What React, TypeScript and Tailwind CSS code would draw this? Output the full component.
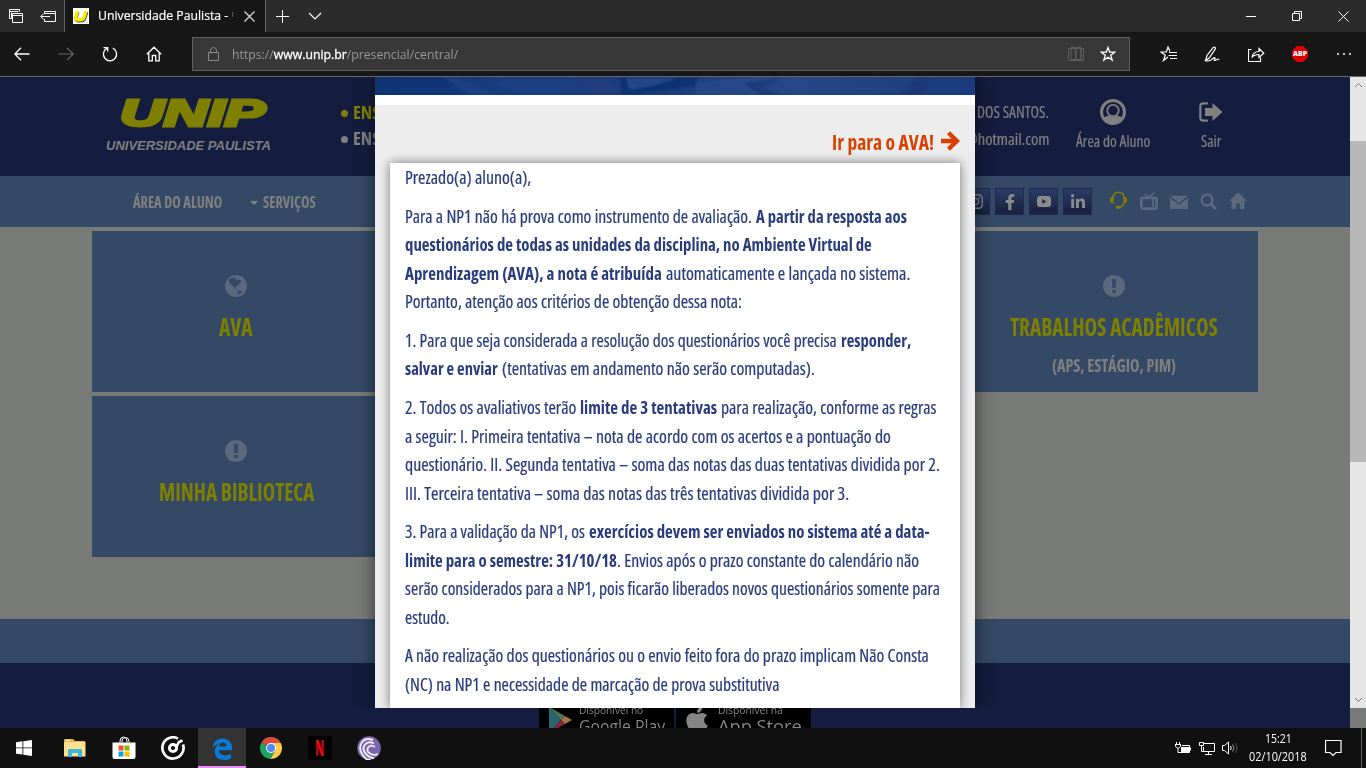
import React, { useLayoutEffect, useRef, useState } from "react";
import { FaApple, FaFacebookF, FaLinkedinIn, FaInstagram } from "react-icons/fa";

const ui = "font-['Open_Sans','Noto_Sans',sans-serif]";

/** One line of text, scaled horizontally to fill the width of its box. */
function Fit({ className = "", children }: { className?: string; children: React.ReactNode }) {
  const outer = useRef<HTMLSpanElement>(null);
  const inner = useRef<HTMLSpanElement>(null);
  const [scale, setScale] = useState(1);
  useLayoutEffect(() => {
    if (outer.current && inner.current) {
      setScale(outer.current.clientWidth / inner.current.offsetWidth);
    }
  }, []);
  return (
    <span ref={outer} className={`block shrink-0 whitespace-nowrap ${className}`}>
      <span ref={inner} className="inline-block origin-left" style={{ transform: `scaleX(${scale})` }}>
        {children}
      </span>
    </span>
  );
}

function Ico({ w, h, children, className = "" }: { w: number; h: number; children: React.ReactNode; className?: string }) {
  return (
    <svg width={w} height={h} viewBox={`0 0 ${w} ${h}`} fill="none" stroke="currentColor" className={`shrink-0 ${className}`}>
      {children}
    </svg>
  );
}

function TabBar() {
  return (
    <div className="flex h-8 bg-[#2b2b2b] text-white">
      <div className="flex w-16 items-center pl-[9px]">
        <Ico w={14} h={14}>
          <path d="M.5 9.500v-9h10v2M.5 2.500h9M2.500 9.500h-2" />
          <path d="M3.500 4.500h10v9h-10zM3.500 6.500h10M2.500 3.500v6" />
        </Ico>
        <Ico w={17} h={12} className="ml-[17px]">
          <path d="M4.500 4V1.500h11v10h-11V9M4.500 3.500h11M1 6.500h9M3.500 3.700L.8 6.500l2.700 2.800" />
        </Ico>
      </div>
      <div className="flex w-[202px] items-center border-x border-[#666] bg-[#171717] pl-2">
        <span className="flex h-4 w-4 items-center justify-center overflow-hidden bg-white">
          <svg width="16" height="16" viewBox="0 0 16 16">
            <path d="M5 4L3 10q-.6 3 3 3h2q3 0 4-3l2-6" fill="none" stroke="#555" strokeWidth="3" />
            <path d="M4.500 3L2.700 9q-.5 2.800 2.500 2.800h2q3 0 4-2.800L13 3" fill="none" stroke="#f5ea00" strokeWidth="3.300" />
          </svg>
        </span>
        <span className={`${ui} ml-[9px] flex text-[13px] [-webkit-text-stroke:0.2px_white]`}>
          <Fit className="w-[130px]">Universidade Paulista -</Fit>
        </span>
        <span className="mb-[3px] ml-1 h-[5px] w-px bg-[#555]" />
        <Ico w={11} h={11} className="ml-[11px]">
          <path d="M.5.5l10 10M10.500.5l-10 10" strokeWidth="1.200" stroke="#ddd" />
        </Ico>
      </div>
      <div className="flex items-center pl-[10px]">
        <Ico w={13} h={13}>
          <path d="M6.500 0v13M0 6.500h13" />
        </Ico>
        <Ico w={14} h={8} className="ml-[19px]">
          <path d="M1 1l6 6 6-6" strokeWidth="1.200" />
        </Ico>
      </div>
      <div className="ml-auto flex">
        <span className="flex w-[46px] items-center justify-center">
          <Ico w={10} h={3}><path d="M0 1.500h10" /></Ico>
        </span>
        <span className="flex w-[46px] items-center justify-center">
          <Ico w={10} h={10}><path d="M.5 2.500h7v7h-7zM2.500 2.500v-2h7v7h-2" /></Ico>
        </span>
        <span className="flex w-[46px] items-center justify-center">
          <Ico w={11} h={11}><path d="M.5.5l10 10M10.500.5l-10 10" /></Ico>
        </span>
      </div>
    </div>
  );
}

function Slot({ children }: { children: React.ReactNode }) {
  return <span className="flex w-11 shrink-0 items-center justify-center">{children}</span>;
}

function Toolbar() {
  return (
    <div className="flex h-[45px] items-stretch border-b border-[#666] bg-[#171717] text-white">
      <Slot>
        <Ico w={16} h={14}><path d="M.8 7H15.500M7 .8L.8 7 7 13.200" strokeWidth="1.300" /></Ico>
      </Slot>
      <Slot>
        <Ico w={16} h={14} className="text-[#6b6b6b]"><path d="M15.200 7H.5M9 .8L15.200 7 9 13.200" strokeWidth="1.200" /></Ico>
      </Slot>
      <Slot>
        <Ico w={16} h={16}><path d="M5.200 2.200A6.600 6.600 0 1 0 10.800 2.200M1.500 1.600h4.200v4" strokeWidth="1.300" /></Ico>
      </Slot>
      <Slot>
        <Ico w={16} h={16}><path d="M.8 8.200L8 1.200l7.200 7M2.800 6.500v8.300h3.500V9.500h3.400v5.300h3.500V6.500" strokeWidth="1.300" /></Ico>
      </Slot>
      <div className="ml-4 mt-[5px] flex h-[34px] w-[938px] items-center border border-[#606060] bg-[#383838] pl-[15px]">
        <Ico w={11} h={14} className="text-[#8b8b8b]">
          <path d="M.5 5.500h10v8H.5zM2.500 5.500V3.500a3 3 0 0 1 6 0v2" />
        </Ico>
        <span className={`${ui} ml-[13px] mt-px flex text-[13px] text-[#989898]`}>
          <Fit className="w-[226px]">
            https://<span className="text-white [-webkit-text-stroke:0.3px_white]">www.unip.br</span>/presencial/central/
          </Fit>
        </span>
        <Ico w={16} h={15} className="ml-auto text-[#5e5e5e]">
          <path d="M.5 1.500h15v12H.5zM3 1v11M13 1v11M3 .5h4.500v12H3M8.500.5H13v12H8.500M8 1v13" />
        </Ico>
        <Ico w={16} h={16} className="ml-4 mr-[13px]">
          <path d="M8 1.500l1.700 4.700h5l-4 3 1.500 4.900L8 11.200l-4.200 2.900 1.500-4.900-4-3h5z" strokeWidth="1.300" />
        </Ico>
      </div>
      <div className="ml-4 flex">
        <Slot>
          <Ico w={17} h={16}><path d="M10 5.500L8 1 6.300 6H1l4.300 3.300L3.500 14.500 8 11M9 6.500h8M8.500 9.500h8.500M10 12.500h7" strokeWidth="1.200" /></Ico>
        </Slot>
        <Slot>
          <Ico w={16} h={16}><path d="M1.500 14.500L3 9.500 9.200 1.500q2-1 2.300 1L5.200 12 1.500 14.700q4 1 6.500-1.300t3-1.500q.6.600-.8 2.300 1 .8 2.400-.6t2.400.5" strokeWidth="1.200" /></Ico>
        </Slot>
        <Slot>
          <Ico w={17} h={15}><path d="M3.500 2.500h-3v12h12v-4M4 10.500q1-6 7-6V1.500l4.800 4.700L11 10.500v-3q-5 0-7 3z" strokeWidth="1.200" /></Ico>
        </Slot>
        <Slot>
          <span className={`${ui} flex h-4 w-4 items-center justify-center bg-[#d00] text-[7px] font-extrabold text-white [clip-path:polygon(30%_0,70%_0,100%_30%,100%_70%,70%_100%,30%_100%,0_70%,0_30%)]`}>
            <Fit className="w-[14px]">ABP</Fit>
          </span>
        </Slot>
        <Slot>
          <Ico w={14} h={4}><path d="M0 2h2M6 2h2M12 2h2" strokeWidth="1.700" /></Ico>
        </Slot>
      </div>
    </div>
  );
}

const cond = "font-['Open_Sans','Noto_Sans',sans-serif] [font-stretch:75%]";

function SiteHeader() {
  return (
    <header className={`${cond} flex h-[99px] bg-[#141d3f] pl-[106px] text-[#808080]`}>
      <div className="w-[165px] shrink-0 pt-[18px] font-['Liberation_Sans',Arial,sans-serif] font-bold italic">
        <div className="flex h-[38px] items-center pl-[14px] text-[36px] leading-[38px] text-[#808000] [-webkit-text-stroke:3px_#808000]">
          <Fit className="w-[145px]">UNIP</Fit>
        </div>
        <div className="mt-[5px] text-[13px] leading-4">
          <Fit className="w-[165px]">UNIVERSIDADE PAULISTA</Fit>
        </div>
      </div>
      <div className="ml-[70px] flex flex-col pt-[23px] text-[17px] font-bold leading-[26px]">
        <div className="flex items-center gap-[5px] text-[#808000]">
          <span className="h-[7px] w-[7px] rounded-full bg-current" />
          <Fit className="w-[27px]">ENS</Fit>
        </div>
        <div className="flex items-center gap-[5px]">
          <span className="h-[7px] w-[7px] rounded-full bg-current" />
          <Fit className="w-[27px]">ENS</Fit>
        </div>
      </div>
      <div className="ml-auto flex [-webkit-text-stroke:0.2px_#808080]">
        <div className="flex flex-col items-end pt-[22px] text-[16px] leading-[27px]">
          <Fit className="w-[72px]">DOS SANTOS.</Fit>
          <Fit className="w-[82px]">@hotmail.com</Fit>
        </div>
        <div className="ml-[27px] flex w-[74px] flex-col items-center pt-[21px] text-[16px] leading-[22px]">
          <svg width="26" height="28" viewBox="0 0 26 28" className="shrink-0">
            <circle cx="13" cy="14" r="11.500" fill="none" stroke="#808080" strokeWidth="3" />
            <path d="M3 20.500q2-2.500 6-3 4 3 8 0 4 .5 6 3-3.500 6-10 6T3 20.500z" fill="#808080" />
            <circle cx="13" cy="12.500" r="5.700" fill="#141d3f" stroke="#808080" strokeWidth="1.800" />
          </svg>
          <Fit className="mt-[4px] w-[74px]">Área do Aluno</Fit>
        </div>
        <div className="ml-[49px] mr-[127px] flex w-6 flex-col items-center pt-[25px] text-[16px] leading-[22px]">
          <svg width="24" height="20" viewBox="0 0 24 20" className="shrink-0">
            <path d="M9 1.300H4.500Q1.300 1.300 1.300 4.500v11q0 3.200 3.200 3.200H9" fill="none" stroke="#808080" strokeWidth="2.200" />
            <path d="M6 6h7.500V1L23.500 10 13.500 19v-5H6z" fill="#808080" />
          </svg>
          <Fit className="mt-[8px] w-5">Sair</Fit>
        </div>
      </div>
    </header>
  );
}

function Social({ children }: { children: React.ReactNode }) {
  return (
    <span className="flex h-[27px] w-[29px] items-center justify-center border border-[#1e2c50] bg-linear-to-b from-[#2b3d69] to-[#18203b] text-[#8b8b8b]">
      {children}
    </span>
  );
}

function SiteNav() {
  return (
    <nav className={`${cond} flex h-[51px] items-center bg-[#344966] pl-[133px] text-[16px] font-bold text-[#808080]`}>
      <Fit className="w-[89px]">ÁREA DO ALUNO</Fit>
      <svg width="8" height="4" viewBox="0 0 8 4" className="ml-7 mt-[3px]"><path d="M0 0h8L4 4z" fill="#808080" /></svg>
      <Fit className="ml-[5px] w-[53px]">SERVIÇOS</Fit>
      <div className="ml-auto mr-[103px] flex items-center">
        <div className="flex gap-[5px]">
          <Social><FaInstagram size={17} /></Social>
          <Social><FaFacebookF size={16} /></Social>
          <Social>
            <svg width="14" height="11" viewBox="0 0 14 11">
              <path d="M3 0h8q3 0 3 3v5q0 3-3 3H3Q0 11 0 8V3Q0 0 3 0zM5.200 3v5l4.300-2.500z" fill="#8b8b8b" fillRule="evenodd" />
            </svg>
          </Social>
          <Social><FaLinkedinIn size={16} /></Social>
        </div>
        <div className="ml-[18px] flex items-center text-[#5b697e]">
          <svg width="17" height="18" viewBox="0 0 17 18" fill="none" className="-mt-[3px]">
            <path d="M2.800 8.500V7Q3.200 1.200 8.500 1.200T14.200 7v1.500" stroke="#808000" strokeWidth="1.600" />
            <path d="M3.500 5.500v7Q0 12.500 0 9t3.500-3.500zM13.500 5.500v7q3.500 0 3.500-3.500t-3.500-3.500z" fill="#808000" />
            <path d="M14 12q-.8 3.300-4 4" stroke="#808000" strokeWidth="1.300" />
            <path d="M6 15h4.500v2.700H6z" fill="#808000" />
          </svg>
          <svg width="18" height="18" viewBox="0 0 18 18" fill="none" stroke="currentColor" className="-mt-[1px] ml-[13px]">
            <path d="M4.500 1.800L9 5l5.500-4.500" strokeWidth="1.600" />
            <rect x="1.400" y="5.900" width="15.200" height="10.700" rx="1" strokeWidth="2.800" />
            <path d="M13 7v8" strokeWidth="1.800" />
          </svg>
          <svg width="18" height="14" viewBox="0 0 18 14" className="ml-3" fill="currentColor">
            <path d="M0 .8h18L9 8zM0 3l9 6.800L18 3v11H0z" />
          </svg>
          <svg width="17" height="17" viewBox="0 0 17 17" fill="none" stroke="currentColor" className="ml-3">
            <circle cx="7" cy="7" r="5.500" strokeWidth="2.400" /><path d="M11 11l5 5" strokeWidth="3" />
          </svg>
          <svg width="18" height="17" viewBox="0 0 18 17" fill="currentColor" className="-mt-[2px] ml-3">
            <path d="M9 0l9 9.300h-2.600V17h-4.700v-5.500H7.300V17H2.600V9.300H0z" />
          </svg>
        </div>
      </div>
    </nav>
  );
}

function Alert() {
  return (
    <svg width="22" height="22" viewBox="0 0 22 22" className="shrink-0">
      <circle cx="11" cy="11" r="11" fill="#5b697f" />
      <path d="M8.800 4h4.400l-.6 9H9.400zM9.300 15h3.400v3H9.300z" fill="#344966" />
    </svg>
  );
}

function Globe() {
  return (
    <svg width="22" height="22" viewBox="0 0 22 22" className="shrink-0">
      <circle cx="11" cy="11" r="11" fill="#5b697f" />
      <path d="M4.500 4L8 2.800l3 .4-1 1.600 1.500 1 1.500-1.800 1 .8 3 1.200-1.800 1.700-2.200 2.500-2 1.500-1 1.700 1.500 1.300 2.500.8L11.800 14 8 11.500 5.500 8.800 4 6.500zM12.500 16.500l2.500-1.200 2 1.200-1.600 2-2.400 1.500z" fill="#344966" />
    </svg>
  );
}

function Card({ icon, title, sub, className = "" }: { icon: React.ReactNode; title: React.ReactNode; sub?: React.ReactNode; className?: string }) {
  return (
    <div className={`${cond} flex h-[161px] w-[288px] flex-col items-center bg-[#344966] pt-11 font-bold ${className}`}>
      {icon}
      <div className="mt-[14px] text-[24px] leading-[32px] text-[#808000]">{title}</div>
      {sub && <div className="mt-[10px] text-[18px] leading-6 text-[#808080]">{sub}</div>}
    </div>
  );
}

type Seg = { t: string; w: string; b?: boolean; tight?: boolean };

const paragraphs: Seg[][][] = [
  [[{ t: "Prezado(a) aluno(a),", w: "w-[126px]" }]],
  [
    [{ t: "Para a NP1 não há prova como instrumento de avaliação.", w: "w-[347px]" }, { t: "A partir da resposta aos", w: "w-[151px]", b: true }],
    [{ t: "questionários de todas as unidades da disciplina, no Ambiente Virtual de", w: "w-[467px]", b: true }],
    [{ t: "Aprendizagem (AVA), a nota é atribuída", w: "w-[257px]", b: true }, { t: "automaticamente e lançada no sistema.", w: "w-[244px]" }],
    [{ t: "Portanto, atenção aos critérios de obtenção dessa nota:", w: "w-[337px]" }],
  ],
  [
    [{ t: "1. Para que seja considerada a resolução dos questionários você precisa", w: "w-[432px]" }, { t: "responder,", w: "w-[70px]", b: true }],
    [{ t: "salvar e enviar", w: "w-[93px]", b: true }, { t: "(tentativas em andamento não serão computadas).", w: "w-[313px]" }],
  ],
  [
    [{ t: "2. Todos os avaliativos terão", w: "w-[171px]" }, { t: "limite de 3 tentativas", w: "w-[137px]", b: true }, { t: "para realização, conforme as regras", w: "w-[215px]" }],
    [{ t: "a seguir: I. Primeira tentativa – nota de acordo com os acertos e a pontuação do", w: "w-[486px]" }],
    [{ t: "questionário. II. Segunda tentativa – soma das notas das duas tentativas dividida por 2.", w: "w-[535px]" }],
    [{ t: "III. Terceira tentativa – soma das notas das três tentativas dividida por 3.", w: "w-[444px]" }],
  ],
  [
    [{ t: "3. Para a validação da NP1, os", w: "w-[180px]" }, { t: "exercícios devem ser enviados no sistema até a data-", w: "w-[341px]", b: true }],
    [{ t: "limite para o semestre: 31/10/18", w: "w-[212px]", b: true }, { t: ". Envios após o prazo constante do calendário não", w: "w-[302px]", tight: true }],
    [{ t: "serão considerados para a NP1, pois ficarão liberados novos questionários somente para", w: "w-[535px]" }],
    [{ t: "estudo.", w: "w-[45px]" }],
  ],
  [
    [{ t: "A não realização dos questionários ou o envio feito fora do prazo implicam Não Consta", w: "w-[524px]" }],
    [{ t: "(NC) na NP1 e necessidade de marcação de prova substitutiva", w: "w-[374px]" }],
  ],
];

function Modal() {
  return (
    <div className={`${cond} h-full w-[600px] bg-[#ededed] shadow-[0_0_15px_rgba(0,0,0,0.6)]`}>
      <svg width="600" height="18" viewBox="0 0 600 18" className="block">
        <defs>
          <linearGradient id="banner" x1="0" x2="1">
            <stop offset="0" stopColor="#103474" />
            <stop offset=".12" stopColor="#12357a" />
            <stop offset=".22" stopColor="#1c3e83" />
            <stop offset=".5" stopColor="#1b3d7e" />
            <stop offset=".7" stopColor="#264685" />
            <stop offset=".85" stopColor="#21427f" />
            <stop offset="1" stopColor="#193a7c" />
          </linearGradient>
          <filter id="soft"><feGaussianBlur stdDeviation="1" /></filter>
        </defs>
        <rect width="600" height="18" fill="url(#banner)" />
        <g filter="url(#soft)">
          <path d="M68 0h12l42 18H96z" fill="#1e4083" />
          <path d="M82 0h12l50 18h-18z" fill="#163a7c" />
          <path d="M200 0h30l15 18h-25z" fill="#233e7b" />
          <path d="M245 0h78l-3 9-66 9h-7z" fill="#0f3271" />
          <path d="M251 1h22l30 0-26 8-23 4z" fill="#24478a" />
          <path d="M322 5l54-5h22l-16 18h-62z" fill="#264786" />
          <path d="M370 6l34-4-18 9 20 7h-20l-12-8z" fill="#1a3b78" />
          <path d="M545 0h10l-8 18h-22z" fill="#1a3977" />
        </g>
      </svg>
      <div className="h-[10px] bg-white" />
      <div className="flex h-[58px] items-end justify-end pb-[6px] pr-[15px] text-[21px] font-bold leading-[30px] text-[#d93f00]">
        <Fit className="w-[102px]">Ir para o AVA!</Fit>
        <svg width="19" height="20" viewBox="0 0 19 20" className="mb-[6px] ml-[7px]">
          <path d="M0 7.700h10.500L6 3.200 9 .3 19 10 9 19.700l-3-2.900 4.500-4.500H0z" fill="#d93f00" />
        </svg>
      </div>
      <div className="mx-[15px] h-[545px] bg-white px-[15px] text-[18.500px] leading-[28.570px] text-[#293c7e] shadow-[0_0_10px_rgba(0,0,0,0.5)]">
        {paragraphs.map((p, i) => (
          <div key={i} className="mb-[10px]">
            {p.map((line, j) => (
              <div key={j} className="flex h-[28.570px]">
                {line.map((s, k) => (
                  <Fit key={k} className={`${s.w} ${s.b ? "font-bold" : "[-webkit-text-stroke:0.200px_#293c7e]"} ${k > 0 && !s.tight ? "ml-[4px]" : ""}`}>
                    {s.t}
                  </Fit>
                ))}
              </div>
            ))}
          </div>
        ))}
      </div>
    </div>
  );
}

function Scrollbar() {
  return (
    <div className="flex w-4 flex-col bg-[#787a78]">
      <div className="flex h-[64px] items-start justify-center bg-[#e6e6e6] pt-[5px]">
        <Ico w={9} h={6}><path d="M1 5l3.500-3.500L8 5" stroke="#777" /></Ico>
      </div>
      <div className="h-[321px] bg-[#b8b8b8]" />
      <div className="flex h-[246px] items-end justify-center bg-[#e6e6e6] pb-[5px]">
        <Ico w={9} h={6}><path d="M1 1l3.500 3.500L8 1" stroke="#777" /></Ico>
      </div>
    </div>
  );
}

function Footer() {
  return (
    <footer className="h-[65px] overflow-hidden bg-[#141d3f] pt-[34px]">
      <div className="flex justify-center gap-[2px] font-['Open_Sans',sans-serif] font-medium text-[#858585]">
        <div className="flex h-10 w-[135px] bg-black pl-[10px]">
          <svg width="23" height="26" viewBox="0 0 23 26" className="mt-[10px]">
            <path d="M0 0l12 13L0 26z" fill="#2a6670" />
            <path d="M0 0l16 9-4 4z" fill="#47785f" />
            <path d="M16 9l7 4-7 4-4-4z" fill="#a87443" />
            <path d="M0 26l16-9-4-4z" fill="#8a2437" />
          </svg>
          <div className="ml-[7px] pt-[7px]">
            <Fit className="w-[64px] text-[10px] leading-3">Disponível no</Fit>
            <Fit className="w-[86px] text-[18px] leading-[20px]">Google Play</Fit>
          </div>
        </div>
        <div className="flex h-10 w-[135px] bg-black pl-[8px]">
          <FaApple size={29} className="mt-2 w-[26px]" />
          <div className="ml-[8px] pt-[7px]">
            <Fit className="w-[65px] text-[10px] leading-3">Disponível na</Fit>
            <Fit className="w-[84px] text-[18px] leading-[20px]">App Store</Fit>
          </div>
        </div>
      </div>
    </footer>
  );
}

function TaskItem({ children, active = false }: { children: React.ReactNode; active?: boolean }) {
  return (
    <span className={`flex w-12 items-center justify-center ${active ? "border-b-2 border-[#ea90f5] bg-[#333]" : ""}`}>
      {children}
    </span>
  );
}

function Taskbar() {
  return (
    <div className="flex h-10 bg-[#101010] text-white">
      <span className="mr-[3px] flex w-12 items-center justify-center">
        <svg width="16" height="16" viewBox="0 0 16 16" fill="#fff">
          <path d="M0 2.200l6.500-.9v6.200H0zM7.300 1.200L16 0v7.500H7.300zM0 8.300h6.500v6.300L0 13.700zM7.300 8.300H16V16l-8.700-1.300z" />
        </svg>
      </span>
      <div className="flex gap-px">
        <TaskItem>
          <svg width="22" height="18" viewBox="0 0 22 18">
            <path d="M0 1q0-1 1-1h8l2 2h10v15H0z" fill="#e9b64d" />
            <path d="M1 3h20.500v14.500H0V4z" fill="#fee08f" />
            <path d="M4 18v-6.500q0-1.500 1.500-1.500h11q1.500 0 1.500 1.500V18h-4v-4H8v4z" fill="#3cb5e5" />
            <path d="M2 1.500h4" stroke="#fff3c4" />
          </svg>
        </TaskItem>
        <TaskItem>
          <svg width="24" height="24" viewBox="0 0 24 24">
            <path d="M.5 6.500h23V21q0 2-2 2h-19q-2 0-2-2z" fill="#fff" />
            <path d="M8 6.500V5q0-4 3.500-4T15 5v1.500M10 6.500V5q0-3 3-3.500 4 0 4 3.500v1.500" fill="none" stroke="#fff" />
            <path d="M6.500 9.500h5v5h-5z" fill="#f25022" /><path d="M12.500 9.500h5v5h-5z" fill="#7fba00" />
            <path d="M6.500 15.500h5v5h-5z" fill="#00a4ef" /><path d="M12.500 15.500h5v5h-5z" fill="#ffb900" />
          </svg>
        </TaskItem>
        <TaskItem>
          <svg width="24" height="24" viewBox="0 0 24 24" fill="none" stroke="#fff">
            <path d="M17 2.600A10.600 10.600 0 1 0 22 8.500" strokeWidth="2.700" />
            <circle cx="12" cy="12" r="3.600" strokeWidth="3" />
            <path d="M15 11.500L18 6l3.500-1.500" strokeWidth="2.600" />
          </svg>
        </TaskItem>
        <TaskItem active>
          <svg width="21" height="22" viewBox="0 0 21 22" className="mt-[4px]">
            <path d="M.5 9.500Q2 1 10.500.5 19.700.7 20.200 10v2.300H7q.3 5 5.800 5.300 3.400 0 6.200-1.700v4.600Q16 22 12 22 2.500 21.500 2.700 13q.3-5 5-7.500Q4 6 .5 9.500zM7.200 8.600h7.100q0-3.900-3.400-4-3.300.2-3.700 4z" fill="#0a7ada" fillRule="evenodd" />
          </svg>
        </TaskItem>
        <TaskItem>
          <svg width="22" height="22" viewBox="0 0 22 22">
            <path d="M11 11L1.500 5.500A11 11 0 0 0 10.500 22L15.500 13.500z" fill="#1da462" />
            <path d="M11 6h9.800A11 11 0 0 1 10.500 22L15.300 13.500z" fill="#ffcd46" />
            <path d="M1.500 5.500A11 11 0 0 1 20.800 6H11v5z" fill="#dd4b3e" />
            <circle cx="11" cy="11" r="5" fill="#fff" /><circle cx="11" cy="11" r="4" fill="#4c8bf5" />
          </svg>
        </TaskItem>
        <TaskItem>
          <svg width="24" height="24" viewBox="0 0 24 24">
            <path d="M0 0h24v24H0z" fill="#000" />
            <path d="M8 4h2.700v15.500L8 20zM13.300 4H16v16l-2.700-.5z" fill="#a90b13" /><path d="M8 4h2.700L16 20l-2.800-.5z" fill="#e50914" />
          </svg>
        </TaskItem>
        <TaskItem>
          <svg width="24" height="24" viewBox="0 0 24 24" fill="none">
            <circle cx="12" cy="12" r="11.800" fill="#7767aa" />
            <path d="M16 4Q8 1 4.500 7T6 19.500 13 23M17 7.500Q11 4.500 7.800 9T9 18t8 4M18 11Q13.500 8 11.200 11.500T13 17.500t8 .5" stroke="#f0edf8" strokeWidth="1.900" />
          </svg>
        </TaskItem>
      </div>
      <div className="ml-auto flex items-center">
        <Ico w={17} h={12}>
          <path d="M7 3.500h7.500v7h-9M15.500 5.500v3M1.500 0v2.500M4.500 0v2.500M0 2.500h6M.5 2.500v2l2 1.500h1l2-1.500v-2M3 6v4.500h3" />
          <path d="M6 5h8v5H6z" fill="#fff" stroke="none" />
        </Ico>
        <Ico w={17} h={13} className="ml-[7px]">
          <path d="M5 1.500h10.500v8h-11V5M9.500 9.500v3M6 12.500h7M.5.500h4v3h-4zM2.500 3.500v6h2" />
        </Ico>
        <Ico w={17} h={14} className="ml-[6px]">
          <path d="M.5 4.500h2L6.500 1v12L2.500 9.500h-2zM8.500 5q1.500 2 0 4" />
          <path d="M10.500 3.500q3 3.500 0 7" stroke="#999" /><path d="M13 2q4 5 0 10" stroke="#555" />
        </Ico>
        <div className={`${ui} ml-[9px] flex w-[60px] flex-col items-center text-[12px] leading-[18px]`}>
          <Fit className="w-[27px]">15:21</Fit>
          <Fit className="w-[58px]">02/10/2018</Fit>
        </div>
        <Ico w={17} h={17} className="ml-[17px] mr-[19px]">
          <path d="M.5.500h15.500v12h-5l-3 3-3-3H.5z" strokeWidth="1.200" />
        </Ico>
        <span className="mr-1 h-10 w-px bg-[#666]" />
      </div>
    </div>
  );
}

export default function App() {
  return (
    <div className="flex h-[768px] w-[1366px] flex-col overflow-hidden">
      <TabBar />
      <Toolbar />
      <div className="flex h-[651px]">
        <div className="relative w-[1350px] overflow-hidden bg-[#787a78]">
          <SiteHeader />
          <SiteNav />
          <main className="h-[392px] pl-[92px] pt-1">
            <div className="grid w-[1166px] grid-cols-[repeat(4,288px)] justify-between gap-y-1">
              <Card icon={<Globe />} title={<Fit className="w-[34px]">AVA</Fit>} />
              <Card
                className="col-start-4"
                icon={<Alert />}
                title={<Fit className="w-[208px]">TRABALHOS ACADÊMICOS</Fit>}
                sub={<Fit className="w-[124px]">(APS, ESTÁGIO, PIM)</Fit>}
              />
              <Card icon={<Alert />} title={<Fit className="w-[155px]">MINHA BIBLIOTECA</Fit>} />
            </div>
          </main>
          <div className="h-[44px] bg-[#344966]" />
          <Footer />
          <div className="absolute inset-x-0 top-0 flex h-[631px] justify-center overflow-hidden">
            <Modal />
          </div>
        </div>
        <Scrollbar />
      </div>
      <Taskbar />
    </div>
  );
}
